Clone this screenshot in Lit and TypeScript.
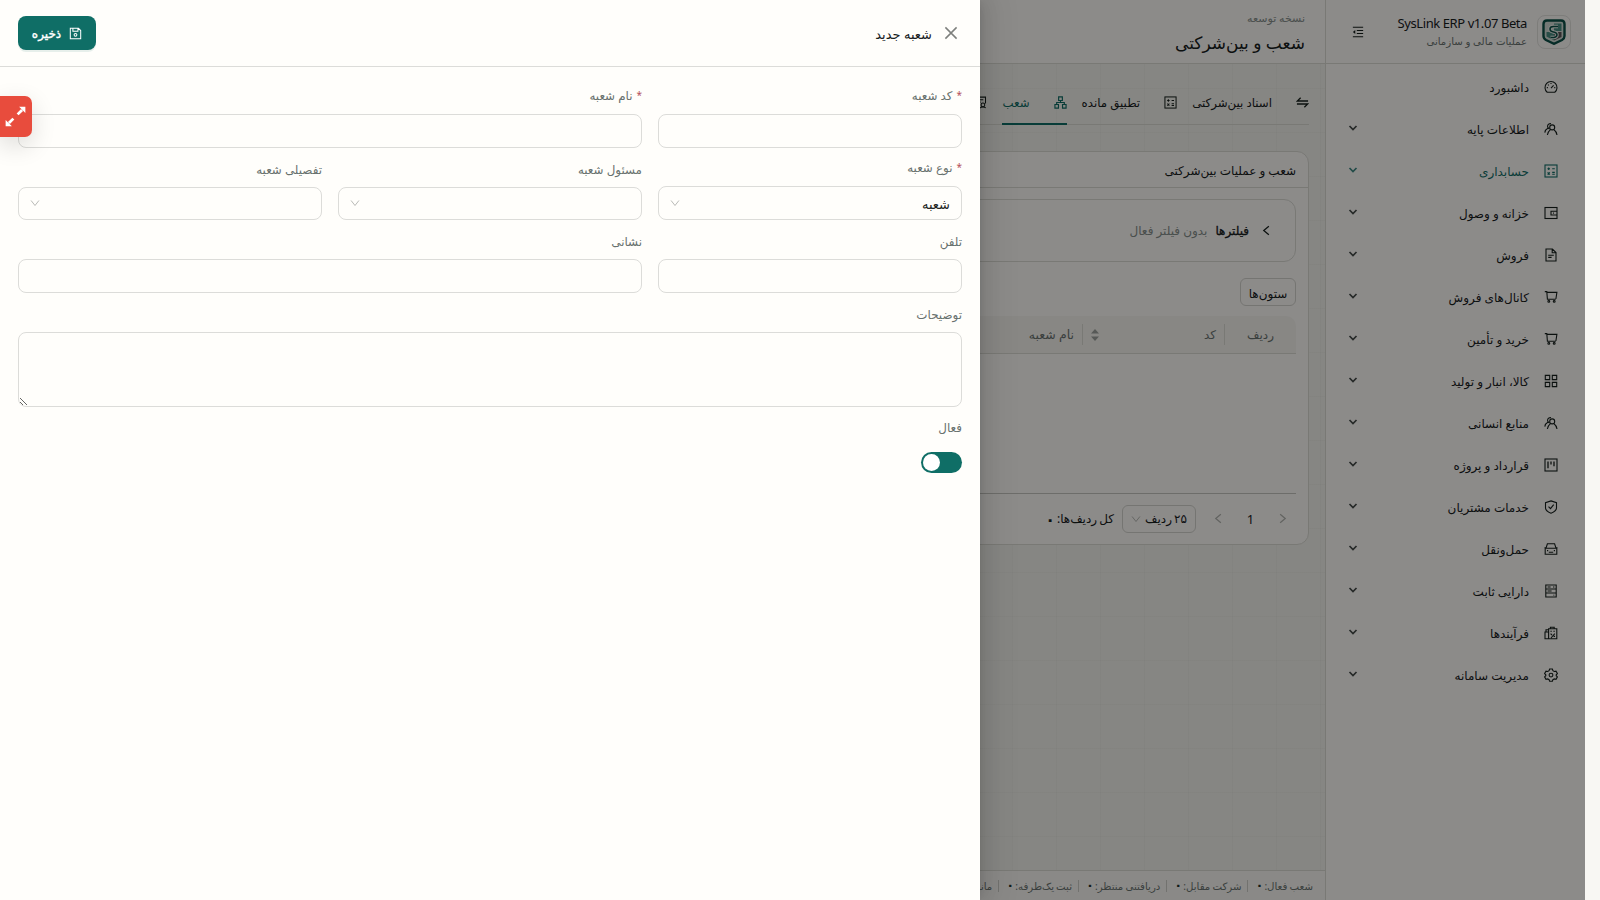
import { LitElement, html, css, svg, nothing } from "lit";
import { customElement, property, state } from "lit/decorators.js";
import { classMap } from "lit/directives/class-map.js";

// All glyphs are drawn on a 14x14 grid with the current text colour
const ICONS: Record<string, unknown> = {
  dashboard: svg`<path d="M3.2 12.2A6 6 0 1 1 10.8 12.2Z"/><path d="M7 8.2 9.6 5.4M7 3v1.1M2.8 7.6h1.1M10.2 7.6h1.1M4 4.6l.8.8"/>`,
  team: svg`<circle cx="8.2" cy="5.4" r="2.5"/><path d="M3.4 13c.2-2 1-3.600 3-5.300M13 13c-.3-2.200-1.200-4-3-5.300M5.600 6.800A2.600 2.600 0 1 1 7 1.800M.8 10.600c.1-2 1.200-3.300 3-4.300"/>`,
  ledger: svg`<rect x="1" y="1" width="12" height="12"/><path d="M3.400 4.800h2.600M4.700 3.500v2.600M8.200 4.800h2.600M8.200 8.400h2.600M8.200 10.200h2.600M3.600 8.300l2.200 2.200M5.800 8.300l-2.200 2.200"/>`,
  wallet: svg`<rect x="1" y="1.500" width="12" height="11"/><path d="M13 5.200H7v3.800h6M9 7.100h.9"/>`,
  file: svg`<path d="M2 1h6.400L12 4.600V13H2ZM8.200 1v3.800H12M4.200 7.200h5.600M4.200 9.400h3.400"/>`,
  cart: svg`<path d="M.8 1.600h2l.6 7.600h8.400M2.900 2.400h10l-1 6.600"/><circle cx="4.800" cy="11.400" r=".9"/><circle cx="10.200" cy="11.400" r=".9"/>`,
  grid: svg`<path d="M1.300 1.400h4.400v4.200H1.300ZM8.300 1.400h4.400v4.200H8.300ZM1.300 8.400h4.400v4.200H1.300ZM8.300 8.400h4.400v4.200H8.300Z"/>`,
  project: svg`<rect x="1" y="1" width="12" height="12"/><path d="M4 3.600v6.600M7 3.600v3M10 3.600v4.600" stroke-width="1.300"/>`,
  safety: svg`<path d="M7 .9 12.500 2.600v5.200C12.500 10 10.200 12 7 13.200 3.800 12 1.500 10 1.500 7.800V2.600ZM4.500 6.600l2 2 3.200-4"/>`,
  car: svg`<path d="M1.200 6.200h11.600v6H1.200ZM2 6.200l1.400-4.400h7.200L12 6.200M3 8.600h1.200M9.800 8.600H11M4.800 10.300h4.400M.5 5.800h1.400M12.100 5.800h1.400"/>`,
  asset: svg`<path d="M1.800 1h10.400v12H1.800ZM1.800 5h10.400M1.800 9h10.400M3.600 3h3M3.600 7h4M9.800 10.700v.8M9 3h1.400"/>`,
  flow: svg`<path d="M4.600 2.800h8.200v10H4.600ZM1 6h3.600v6.800H1ZM2 6V3.800h2.600M6.400 2.600V1.200h3.800v1.400M6.400 5.200h1.400M9.400 5.200h1.400M6.600 7.600l1.400 1.600M10.800 7.600 7 12M9.600 10.400h1.400"/>`,
  setting: svg`<path d="M5.600 1h2.800l.5 1.700 1.400.8 1.700-.4 1.400 2.400-1.200 1.300v.9l1.200 1.200-1.400 2.400-1.700-.4-1.400.8-.5 1.500H5.600l-.5-1.500-1.400-.8-1.700.4L.6 8.900l1.200-1.200v-.9L.6 5.500 2 3.100l1.700.4 1.400-.8Z"/><circle cx="7" cy="7.100" r="1.900"/>`,
  fold: svg`<path d="M1 1.500h12M5.600 5.200H13M5.600 8.800H13M1 12.500h12" stroke-width="1.300"/><path d="M3.800 4.800v4.400L1 7Z" fill="currentColor" stroke="none"/>`,
  swap: svg`<path d="M13 5.400H1.400L5 1.800M1 8.600h11.600L9 12.200" stroke-width="1.400"/>`,
  branches: svg`<path d="M5 1h4v3.800H5ZM1 9.200h3.800V13H1ZM9.200 9.200H13V13H9.200ZM7 4.800V7M2.900 9.200V7h8.200v2.200" stroke-width="1.250"/>`,
  audit: svg`<path d="M12.400 8V1.200H1.600v11.600h5M4 4h6M4 6.600h3"/><circle cx="9.600" cy="9.600" r="2"/><path d="M6.600 13c1-1.400 5-1.400 6 0"/>`,
  save: svg`<path d="M1.400 1.400h8.800l2.400 2.400v8.800H1.400ZM4.200 1.600v3h5.400v-3"/><circle cx="7" cy="8.400" r="1.500"/>`,
  close: svg`<path d="M1.400 1.400 12.600 12.600M12.600 1.400 1.400 12.600" stroke-width="1.500"/>`,
  down: svg`<path d="M1.500 3.500 7 10.500 12.500 3.500" stroke-width="1.300"/>`,
  left: svg`<path d="M10 1.500 3.500 7 10 12.500" stroke-width="1.600"/>`,
  right: svg`<path d="M4 1.500 10.500 7 4 12.500" stroke-width="1.600"/>`,
  expand: svg`<path d="M8.300 5.700 11 3M5.700 8.300 3 11" stroke-width="1.700"/><path d="M9.200 1h3.800v3.800ZM1 9.200V13h3.800Z" fill="currentColor" stroke="none"/>`,
};

const MENU: [string, string][] = [
  ["dashboard", "داشبورد"],
  ["team", "اطلاعات پایه"],
  ["ledger", "حسابداری"],
  ["wallet", "خزانه و وصول"],
  ["file", "فروش"],
  ["cart", "کانال‌های فروش"],
  ["cart", "خرید و تأمین"],
  ["grid", "کالا، انبار و تولید"],
  ["team", "منابع انسانی"],
  ["project", "قرارداد و پروژه"],
  ["safety", "خدمات مشتریان"],
  ["car", "حمل‌ونقل"],
  ["asset", "دارایی ثابت"],
  ["flow", "فرآیندها"],
  ["setting", "مدیریت سامانه"],
];

const TABS: [string, string][] = [
  ["swap", "اسناد بین‌شرکتی"],
  ["ledger", "تطبیق مانده"],
  ["branches", "شعب"],
  ["audit", "کنترل"],
];

const STATS = ["شعب فعال:", "شرکت مقابل:", "دریافتنی منتظر:", "ثبت یک‌طرفه:", "مانده باز:"];

@customElement("erp-icon")
export class ErpIcon extends LitElement {
  @property() name = "";
  @property({ type: Number }) size = 14;

  static styles = css`
    :host {
      display: inline-flex;
      flex: none;
    }

    svg {
      display: block;
      fill: none;
      stroke: currentColor;
      stroke-width: 1.1;
    }
  `;

  render() {
    return html`<svg width=${this.size} height=${this.size} viewBox="0 0 14 14">${ICONS[this.name]}</svg>`;
  }
}

@customElement("erp-sidebar")
export class ErpSidebar extends LitElement {
  static styles = css`
    :host {
      display: block;
      box-sizing: border-box;
      width: 260px;
      flex: none;
      background: #fffdfa;
      border-left: 1px solid #dcdcd6;
    }

    .brand {
      display: flex;
      align-items: center;
      box-sizing: border-box;
      height: 64px;
      padding: 1px 14px 0 26px;
      border-bottom: 1px solid #dcdcd6;
    }

    .logo {
      display: grid;
      place-items: center;
      box-sizing: border-box;
      width: 34px;
      height: 34px;
      border: 1px solid #e4e3df;
      border-radius: 8px;
    }

    .names {
      flex: 1;
      margin: 0 10px 2px 0;
    }

    .title {
      font-size: 13px;
      letter-spacing: -0.42px;
      line-height: 19px;
      white-space: nowrap;
    }

    .subtitle {
      font-size: 10.2px;
      line-height: 16px;
      color: #6b7471;
    }

    .menu {
      padding-top: 2px;
    }

    .item {
      display: flex;
      align-items: center;
      height: 42px;
      padding: 0 27px 0 22px;
      gap: 15px;
      font-size: 12px;
    }

    .item.active {
      color: #0f6e66;
    }

    .label {
      flex: 1;
      padding-top: 1px;
    }

    .arrow {
      margin-bottom: 2px;
      stroke-width: 1.7;
      fill: none;
      stroke: currentColor;
      opacity: 0.8;
    }
  `;

  render() {
    return html`
      <div class="brand">
        <div class="logo">
          <svg width="24" height="26" viewBox="0 0 24 26">
            <path d="M5 1.500h14q3.500 0 3.500 3.500v12q0 2.500-2.500 4L12 24.800l-8-3.800Q1.500 19.500 1.500 17V5q0-3.500 3.500-3.500Z" fill="#d3ddd7" stroke="#0c5148" stroke-width="2.400" />
            <path d="M12 4.500h7.500V12H12Z" fill="#4a8f83" />
            <path d="M4.500 13H12v8.500l-7.500-4Z" fill="#4a8f83" />
            <path d="M12 13h7.500v5L12 21.500Z" fill="#595456" />
            <path d="M16 7.500h-4.500q-3.500 0-3.500 2.500t3.500 3q3.500.5 3.500 2.800T12 18.500H8.500" fill="none" stroke="#eef3ef" stroke-width="3.400" />
            <path d="M16 7.500h-4.500q-3.500 0-3.500 2.500t3.500 3q3.500.5 3.500 2.800T12 18.500H8.500" fill="none" stroke="#0c5148" stroke-width="1.500" />
          </svg>
        </div>
        <div class="names">
          <div class="title">SysLink ERP v1.07 Beta</div>
          <div class="subtitle">عملیات مالی و سازمانی</div>
        </div>
        <erp-icon name="fold" size="12"></erp-icon>
      </div>
      <div class="menu">
        ${MENU.map(
          ([icon, label], i) => html`
            <div class=${classMap({ item: true, active: icon === "ledger" })}>
              <erp-icon name=${icon}></erp-icon>
              <span class="label">${label}</span>
              ${i > 0
                ? html`<svg class="arrow" width="10" height="8" viewBox="0 0 10 8"><path d="M1.500 2 5 5.500 8.500 2" /></svg>`
                : nothing}
            </div>
          `,
        )}
      </div>
    `;
  }
}

@customElement("erp-branches")
export class ErpBranches extends LitElement {
  static styles = css`
    :host {
      display: flex;
      flex-direction: column;
      flex: 1;
      min-width: 0;
      white-space: nowrap;
    }

    header {
      box-sizing: border-box;
      height: 64px;
      padding: 8px 20px 0;
      background: #fffdfa;
      border-bottom: 1px solid #dcdcd6;
    }

    .eyebrow {
      font-size: 11px;
      line-height: 19px;
      color: #87908c;
    }

    .heading {
      font-size: 17px;
      line-height: 31px;
    }

    .content {
      flex: 1;
      padding: 16px;
    }

    .tabs {
      display: flex;
      gap: 15px;
      height: 44px;
      border-bottom: 1px solid #dcdcd6;
      font-size: 11.8px;
    }

    .tab {
      display: flex;
      align-items: center;
      gap: 24px;
      box-sizing: border-box;
      height: 45px;
      padding-top: 1px;
      border-bottom: 2px solid transparent;
    }

    .tab.active {
      color: #0f6e66;
      border-color: #0f6e66;
    }

    .card {
      box-sizing: border-box;
      height: 394px;
      margin-top: 26px;
      background: #fffdfa;
      border: 1px solid #dcdcd6;
      border-radius: 12px;
      font-size: 12px;
    }

    .card-title {
      height: 35px;
      line-height: 37px;
      padding: 0 12px;
      border-bottom: 1px solid #dcdcd6;
    }

    .card-body {
      padding: 11px 12px;
    }

    .filters {
      display: flex;
      align-items: center;
      box-sizing: border-box;
      height: 63px;
      padding: 0 23px;
      border: 1px solid #dcdcd6;
      border-radius: 12px;
    }

    .filters b {
      font-weight: 400;
      -webkit-text-stroke: 0.3px currentColor;
      margin: 0 12px 0 8px;
    }

    .muted {
      color: #87908c;
    }

    .columns {
      display: block;
      box-sizing: border-box;
      width: 56px;
      height: 28px;
      margin-top: 16px;
      border: 1px solid #d5d5cf;
      border-radius: 6px;
      line-height: 29px;
      text-align: center;
    }

    .thead {
      display: flex;
      align-items: center;
      height: 37px;
      margin-top: 10px;
      background: #f7f6f1;
      border-bottom: 1px solid #dcdcd6;
      border-radius: 0 10px 0 0;
      color: #6b7471;
    }

    .th {
      display: flex;
      align-items: center;
      justify-content: space-between;
      box-sizing: border-box;
      height: 21px;
      padding: 0 8px;
      border-left: 1px solid #dcdcd6;
    }

    .th.index {
      width: 72px;
      justify-content: center;
    }

    .th.code {
      width: 142px;
    }

    .th.name {
      flex: 1;
      border: 0;
      font-size: 12.5px;
    }

    .empty {
      height: 139px;
      border-bottom: 1px solid #c6c7c1;
    }

    .pager {
      display: flex;
      align-items: center;
      height: 49px;
      padding-right: 8px;
    }

    .pager erp-icon {
      color: #b3b5b0;
    }

    .page {
      width: 53px;
      text-align: center;
      font-size: 13px;
    }

    .size {
      display: flex;
      align-items: center;
      justify-content: space-between;
      box-sizing: border-box;
      width: 74px;
      height: 28px;
      margin: 0 17px 0 8px;
      padding: 0 8px;
      border: 1px solid #d5d5cf;
      border-radius: 6px;
      word-spacing: -1px;
    }

    .total {
      display: flex;
      align-items: center;
      gap: 2px;
      word-spacing: -1px;
    }

    .zero {
      font-size: 16px;
      line-height: 1;
    }

    footer {
      display: flex;
      align-items: center;
      box-sizing: border-box;
      height: 30px;
      padding: 0 12px;
      background: #fbfaf6;
      border-top: 1px solid #dcdcd6;
      font-size: 10.2px;
      color: #6b7471;
    }

    .stat {
      display: flex;
      align-items: center;
      gap: 1px;
      word-spacing: -0.5px;
    }

    .stat .zero {
      font-size: 13px;
      color: #20302c;
    }

    .bar {
      width: 1px;
      height: 12px;
      margin: 0 7px 0 6px;
      background: #d0d0ca;
    }
  `;

  render() {
    return html`
      <header>
        <div class="eyebrow">نسخه توسعه</div>
        <div class="heading">شعب و بین‌شرکتی</div>
      </header>
      <div class="content">
        <div class="tabs">
          ${TABS.map(
            ([icon, label]) => html`
              <div class=${classMap({ tab: true, active: icon === "branches" })}>
                <erp-icon name=${icon} size="13"></erp-icon><span>${label}</span>
              </div>
            `,
          )}
        </div>
        <div class="card">
          <div class="card-title">شعب و عملیات بین‌شرکتی</div>
          <div class="card-body">
            <div class="filters">
              <erp-icon name="left" size="11"></erp-icon>
              <b>فیلترها</b>
              <span class="muted">بدون فیلتر فعال</span>
            </div>
            <div class="columns">ستون‌ها</div>
            <div class="thead">
              <div class="th index">ردیف</div>
              <div class="th code">
                کد
                <svg width="8" height="12" viewBox="0 0 8 12" fill="#9fa39f"><path d="M4 0 8 4.500H0ZM0 7.500h8L4 12Z" /></svg>
              </div>
              <div class="th name">نام شعبه</div>
            </div>
            <div class="empty"></div>
            <div class="pager">
              <erp-icon name="right" size="11"></erp-icon>
              <span class="page">1</span>
              <erp-icon name="left" size="11"></erp-icon>
              <div class="size">۲۵ ردیف <erp-icon name="down" size="10"></erp-icon></div>
              <div class="total">کل ردیف‌ها: <b class="zero">۰</b></div>
            </div>
          </div>
        </div>
      </div>
      <footer>
        ${STATS.map(
          (label, i) => html`
            ${i > 0 ? html`<span class="bar"></span>` : nothing}
            <span class="stat">${label} <b class="zero">۰</b></span>
          `,
        )}
      </footer>
    `;
  }
}

@customElement("erp-branch-drawer")
export class ErpBranchDrawer extends LitElement {
  @state() private _active = true;

  static styles = css`
    :host {
      display: block;
      background: #fffefb;
      box-shadow:
        6px 0 16px rgba(0, 0, 0, 0.08),
        3px 0 6px -4px rgba(0, 0, 0, 0.12),
        9px 0 28px 8px rgba(0, 0, 0, 0.05);
    }

    .head {
      display: flex;
      align-items: center;
      box-sizing: border-box;
      height: 67px;
      padding: 0 22px 0 18px;
      border-bottom: 1px solid #dcdcd9;
    }

    .close {
      color: #7d7f7c;
    }

    .title {
      flex: 1;
      margin: 1px 12px 0 0;
      font-size: 13px;
    }

    .save {
      display: flex;
      align-items: center;
      justify-content: center;
      gap: 8px;
      width: 78px;
      height: 34px;
      border: 0;
      border-radius: 8px;
      background: #0f6e66;
      box-shadow: 0 2px 0 rgba(15, 110, 102, 0.1);
      color: #fff;
      font: 12px var(--erp-font);
      -webkit-text-stroke: 0.4px currentColor;
    }

    .form {
      display: grid;
      grid-template-columns: repeat(3, 304px);
      gap: 10.7px 16px;
      padding: 18.7px 18px;
      align-items: end;
    }

    .field {
      display: flex;
      flex-direction: column;
      gap: 6px;
    }

    .wide {
      grid-column: span 2;
    }

    .full {
      grid-column: span 3;
    }

    label {
      display: flex;
      gap: 4px;
      height: 22px;
      font-size: 11.9px;
      line-height: 20px;
      color: #68716e;
    }

    .required {
      line-height: 18px;
    }

    .star {
      font-size: 10px;
      color: #b4525a;
    }

    input,
    textarea,
    .select {
      box-sizing: border-box;
      width: 100%;
      height: 34px;
      margin: 0;
      padding: 0 11px;
      border: 1px solid #dcdcd9;
      border-radius: 8px;
      background: #fffefb;
      outline: none;
      font: 13px var(--erp-font);
      color: #1d2522;
    }

    textarea {
      display: block;
      height: 75px;
    }

    .select {
      display: flex;
      align-items: center;
      justify-content: space-between;
    }

    .select span {
      padding-top: 1px;
    }

    .select.short {
      height: 33px;
    }

    .select erp-icon {
      margin-bottom: 1px;
      color: #b3b4b1;
    }

    .switch {
      display: flex;
      justify-content: flex-start;
      box-sizing: border-box;
      width: 41px;
      height: 21px;
      margin-top: 7px;
      padding: 2px;
      border-radius: 11px;
      background: #9a9d9a;
    }

    .switch.on {
      justify-content: flex-end;
      background: #0f6e66;
    }

    .knob {
      width: 17px;
      height: 17px;
      border-radius: 50%;
      background: #fff;
    }
  `;

  private _toggle() {
    this._active = !this._active;
  }

  private _label(text: string, required = false) {
    return html`
      <label class=${classMap({ required })}>
        ${required ? html`<span class="star">*</span>` : nothing}<span>${text}</span>
      </label>
    `;
  }

  private _select(label: string, value = "", required = false) {
    return html`
      <div class="field">
        ${this._label(label, required)}
        <div class=${classMap({ select: true, short: !required })}>
          <span>${value}</span><erp-icon name="down" size="10"></erp-icon>
        </div>
      </div>
    `;
  }

  render() {
    return html`
      <div class="head">
        <erp-icon class="close" name="close" size="14"></erp-icon>
        <div class="title">شعبه جدید</div>
        <button class="save"><erp-icon name="save" size="13"></erp-icon>ذخیره</button>
      </div>
      <div class="form">
        <div class="field">${this._label("کد شعبه", true)}<input /></div>
        <div class="field wide">${this._label("نام شعبه", true)}<input /></div>
        ${this._select("نوع شعبه", "شعبه", true)} ${this._select("مسئول شعبه")} ${this._select("تفصیلی شعبه")}
        <div class="field">${this._label("تلفن")}<input /></div>
        <div class="field wide">${this._label("نشانی")}<input /></div>
        <div class="field full">${this._label("توضیحات")}<textarea></textarea></div>
        <div class="field full">
          ${this._label("فعال")}
          <div class=${classMap({ switch: true, on: this._active })} @click=${this._toggle}>
            <span class="knob"></span>
          </div>
        </div>
      </div>
    `;
  }
}

@customElement("app-root")
export class AppRoot extends LitElement {
  static styles = css`
    :host {
      --erp-font: "Noto Sans", "DejaVu Sans", sans-serif;
      display: block;
      position: relative;
      height: 100vh;
      overflow: hidden;
      direction: rtl;
      background: #f8f7f3;
      font-family: var(--erp-font);
      color: #17201d;
    }

    .shell {
      display: flex;
      height: 100%;
      margin-right: 15px;
      background-color: #f5f4ee;
      background-image:
        linear-gradient(rgba(15, 60, 52, 0.025) 1px, transparent 1px),
        linear-gradient(90deg, rgba(15, 60, 52, 0.025) 1px, transparent 1px);
      background-size: 44px 44px;
      /* the grid is anchored to the window's left edge, not to the RTL start */
      background-attachment: fixed;
    }

    .mask {
      position: absolute;
      inset: 0 15px 0 0;
      background: rgba(0, 0, 0, 0.45);
    }

    .drawer {
      position: absolute;
      top: 0;
      bottom: 0;
      left: 0;
      width: 980px;
    }

    .expand {
      position: absolute;
      top: 96px;
      left: 0;
      display: grid;
      place-items: center;
      box-sizing: border-box;
      width: 32px;
      height: 41px;
      padding-right: 1px;
      border-radius: 0 7px 7px 0;
      background: #e84c3d;
      box-shadow: 0 8px 24px rgba(0, 0, 0, 0.14);
      color: #fff;
    }
  `;

  render() {
    return html`
      <div class="shell">
        <erp-sidebar></erp-sidebar>
        <erp-branches></erp-branches>
      </div>
      <div class="mask"></div>
      <erp-branch-drawer class="drawer"></erp-branch-drawer>
      <div class="expand"><erp-icon name="expand" size="23"></erp-icon></div>
    `;
  }
}

declare global {
  interface HTMLElementTagNameMap {
    "app-root": AppRoot;
    "erp-icon": ErpIcon;
    "erp-sidebar": ErpSidebar;
    "erp-branches": ErpBranches;
    "erp-branch-drawer": ErpBranchDrawer;
  }
}
